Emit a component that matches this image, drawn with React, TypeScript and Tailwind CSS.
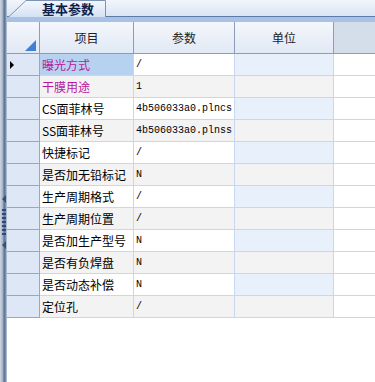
import React from 'react';

const rows = [
    { name: '曝光方式', value: '/', pink: true },
    { name: '干膜用途', value: '1', pink: true },
    { name: 'CS面菲林号', value: '4b506033a0.plncs' },
    { name: 'SS面菲林号', value: '4b506033a0.plnss' },
    { name: '快捷标记', value: '/' },
    { name: '是否加无铅标记', value: 'N' },
    { name: '生产周期格式', value: '/' },
    { name: '生产周期位置', value: '/' },
    { name: '是否加生产型号', value: 'N' },
    { name: '是否有负焊盘', value: 'N' },
    { name: '是否动态补偿', value: 'N' },
    { name: '定位孔', value: '/' },
];

const cjk = { fontFamily: '"Noto Sans CJK SC", "Liberation Sans", sans-serif' };
const mono = { fontFamily: '"Liberation Mono", "Noto Sans CJK SC", monospace' };

const App = () => {
    return (
        <div className="w-[375px] h-[382px] flex bg-white overflow-hidden" style={cjk}>
            {/* left splitter strip */}
            <div className="w-[7px] h-full flex flex-col items-center justify-center pt-[62px] gap-[2px] bg-[linear-gradient(to_right,#cfd6e0_0%,#a9b6c9_35%,#5e7398_60%,#6b80a4_75%,#c4cfdd_100%)]">
                <div className="w-0 h-0 border-y-[4px] border-y-transparent border-r-[4px] border-r-[#3b4f73] mb-[4px]" />
                {Array.from({ length: 7 }).map((_, i) => (
                    <div key={i} className="w-[4px] h-[2px] bg-[#2f4a7a]" />
                ))}
                <div className="w-0 h-0 border-y-[4px] border-y-transparent border-r-[4px] border-r-[#3b4f73] mt-[4px]" />
            </div>

            <div className="flex-1 flex flex-col">
                {/* tab bar */}
                <div className="h-[17px] flex bg-[linear-gradient(to_bottom,#f2f6fb,#d9e4f3)] border-b border-[#5d7aa8]">
                    <div className="relative w-[98px] h-[17px] ml-[1px]">
                        <svg className="absolute inset-0" width="98" height="17" viewBox="0 0 98 17">
                            <defs>
                                <linearGradient id="tabg" x1="0" y1="0" x2="0" y2="1">
                                    <stop offset="0" stopColor="#f4f8fd" />
                                    <stop offset="1" stopColor="#d4e2f4" />
                                </linearGradient>
                            </defs>
                            <path d="M0.5 17 L18 0.5 L97.5 0.5 L97.5 17" fill="url(#tabg)" stroke="#7d93b6" strokeWidth="1" />
                        </svg>
                        <span className="absolute left-[34px] top-0 text-[13px] leading-[17px] font-bold text-[#10204a]">基本参数</span>
                    </div>
                </div>
                <div className="h-[5px] bg-[#a8c1e4]" />

                {/* grid */}
                <div className="grid grid-cols-[33px_94px_101px_99px_1fr] text-[12px] text-black">
                    {/* header */}
                    <div className="h-[32px] relative border-r border-b border-[#8d9db6] bg-[linear-gradient(to_bottom,#f4f7fc,#e1e9f5)]">
                        <div className="absolute right-[3px] bottom-[2px] w-0 h-0 border-l-[11px] border-l-transparent border-b-[11px] border-b-[#3f7fd6]" />
                    </div>
                    {['项目', '参数', '单位'].map((h) => (
                        <div key={h} className="h-[32px] flex items-center justify-center border-r border-b border-[#8d9db6] bg-[linear-gradient(to_bottom,#f4f7fc,#e1e9f5)] text-[#222]">
                            {h}
                        </div>
                    ))}
                    <div className="h-[32px] border-b border-[#8d9db6] bg-[#d4ddea]" />

                    {/* rows */}
                    {rows.map((r, i) => {
                        const even = i % 2 === 0;
                        const sel = i === 0;
                        return (
                            <React.Fragment key={r.name}>
                                <div className="h-[22px] flex items-center pl-[3px] border-r border-b border-[#98a8c0] bg-[#dde7f5]">
                                    {sel && <div className="w-0 h-0 border-y-[4px] border-y-transparent border-l-[4px] border-l-black" />}
                                </div>
                                <div className={`h-[22px] flex items-center pl-[2px] whitespace-nowrap overflow-hidden border-r border-b border-[#c9d7ee] ${sel ? 'bg-[#b6d2f0]' : even ? 'bg-white' : 'bg-[#f3f3f3]'} ${r.pink ? 'text-[#b8179c]' : 'text-black'}`}>
                                    {r.name}
                                </div>
                                <div className={`h-[22px] flex items-center pl-[2px] whitespace-nowrap overflow-hidden text-[10px] border-r border-b border-[#c9d7ee] ${even ? 'bg-white' : 'bg-[#f3f3f3]'}`} style={mono}>
                                    {r.value}
                                </div>
                                <div className={`h-[22px] border-r border-b border-[#c9d7ee] ${even ? 'bg-[#e8f1fb]' : 'bg-[#f3f3f3]'}`} />
                                <div className="h-[22px] border-b border-[#c9d7ee] bg-white" />
                            </React.Fragment>
                        );
                    })}
                </div>
            </div>
        </div>
    );
};

export default App;
